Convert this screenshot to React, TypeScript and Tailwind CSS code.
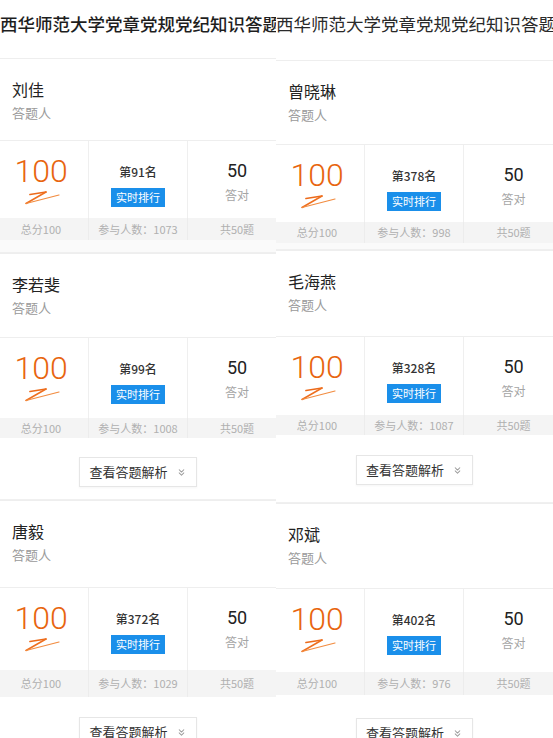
import { ChevronsDown } from "lucide-react";

type Entry = {
  name: string;
  rank: number;
  people: number;
  headCls: string;
  statsCls: string;
  footCls: string;
};

const TITLE = "西华师范大学党章党规党纪知识答题";

function Swoosh() {
  return (
    <svg width="40" height="14" viewBox="0 0 40 14" className="mt-[4px]">
      <path d="M9 3.5 L25 1" stroke="#ec6a1a" strokeWidth="1.7" strokeLinecap="round" />
      <path d="M25 1 L5 12.5" stroke="#ee6f1f" strokeWidth="1.5" strokeLinecap="round" />
      <path d="M5 12.5 L38 4" stroke="#f28c40" strokeWidth="1.2" strokeLinecap="round" />
    </svg>
  );
}

function Card({ e }: { e: Entry }) {
  return (
    <div className="bg-white">
      {/* name block */}
      <div className={`${e.headCls} border-t border-[#eeeeee] pl-[12px] pt-[19px]`}>
        <div className="text-[16px] leading-[22px] text-[#222222]">{e.name}</div>
        <div className="mt-[4px] text-[13px] leading-[18px] text-[#9a9a9a]">答题人</div>
      </div>

      {/* stats */}
      <div className={`grid grid-cols-[88px_100px_1fr] border-t border-[#eeeeee] ${e.statsCls}`}>
        <div className="flex flex-col items-center pt-[14px] pr-[6px]">
          <div className="font-['Roboto',sans-serif] text-[32px] font-light leading-[32px] text-[#e8650f]">100</div>
          <Swoosh />
        </div>
        <div className="flex flex-col items-center border-x border-[#efefef] pt-[23px]">
          <div className="text-[12px] leading-[16px] font-medium text-[#333333]">第{e.rank}名</div>
          <div className="mt-[8px] bg-[#1a8fea] px-[5px] text-[11px] leading-[19px] text-white">实时排行</div>
        </div>
        <div className="flex flex-col items-center pt-[19px] pl-[10px]">
          <div className="font-['Roboto',sans-serif] text-[18px] leading-[22px] text-[#222222]">50</div>
          <div className="mt-[5px] text-[12px] leading-[16px] text-[#a5a5a5]">答对</div>
        </div>
      </div>

      {/* footer */}
      <div className={`grid grid-cols-[88px_100px_1fr] bg-[#f4f4f4] text-[11px] text-[#b0b0b0] ${e.footCls}`}>
        <div className="flex items-center justify-center pr-[6px]">总分100</div>
        <div className="flex items-center justify-center border-x border-[#ececec]">参与人数：{e.people}</div>
        <div className="flex items-center justify-center pl-[10px]">共50题</div>
      </div>
    </div>
  );
}

function MoreButton({ cls }: { cls: string }) {
  return (
    <div className={`flex justify-center bg-white ${cls}`}>
      <div className="flex h-[30px] items-center gap-[8px] border border-[#e6e6e6] bg-white px-[9px] text-[13px] text-[#333333] shadow-[0_1px_2px_rgba(0,0,0,0.04)]">
        查看答题解析
        <ChevronsDown size={11} strokeWidth={2.2} className="text-[#999999]" />
      </div>
    </div>
  );
}

export default function App() {
  return (
    <div className="flex h-[738px] w-[553px] items-start overflow-hidden bg-white font-['Noto_Sans_CJK_SC',sans-serif]">
      {/* left column */}
      <div className="w-[276px] shrink-0 overflow-hidden">
        <div className="h-[58px] overflow-hidden whitespace-nowrap pt-[11px] text-[17.5px] font-medium leading-[26px] text-[#1e1e1e]">
          {TITLE}
        </div>
        <Card e={{ name: "刘佳", rank: 91, people: 1073, headCls: "h-[82px]", statsCls: "h-[78px]", footCls: "h-[22px]" }} />
        <div className="h-[13px] border-b border-[#efefef] bg-[#fafafa]" />
        <Card e={{ name: "李若斐", rank: 99, people: 1008, headCls: "h-[84px]", statsCls: "h-[81px]", footCls: "h-[20px]" }} />
        <MoreButton cls="h-[62px] pt-[19px] border-b border-[#f0f0f0]" />
        <Card e={{ name: "唐毅", rank: 372, people: 1029, headCls: "h-[87px]", statsCls: "h-[83px]", footCls: "h-[27px]" }} />
        <MoreButton cls="h-[60px] pt-[20px]" />
      </div>

      {/* right column */}
      <div className="min-w-0 flex-1 overflow-hidden">
        <div className="h-[60px] overflow-hidden whitespace-nowrap pt-[11px] text-[17.5px] leading-[26px] text-[#2a2a2a]">
          {TITLE}
        </div>
        <Card e={{ name: "曾晓琳", rank: 378, people: 998, headCls: "h-[84px]", statsCls: "h-[78px]", footCls: "h-[21px]" }} />
        <div className="h-[7px] border-b border-[#efefef] bg-[#fafafa]" />
        <Card e={{ name: "毛海燕", rank: 328, people: 1087, headCls: "h-[86px]", statsCls: "h-[79px]", footCls: "h-[20px]" }} />
        <MoreButton cls="h-[68px] pt-[20px] border-b border-[#f0f0f0]" />
        <Card e={{ name: "邓斌", rank: 402, people: 976, headCls: "h-[85px]", statsCls: "h-[84px]", footCls: "h-[23px]" }} />
        <MoreButton cls="h-[60px] pt-[23px]" />
      </div>
    </div>
  );
}
